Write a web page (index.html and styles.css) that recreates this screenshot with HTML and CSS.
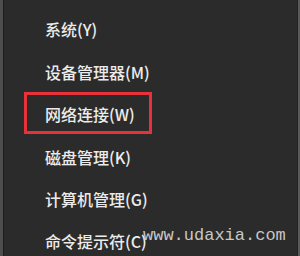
FILE: index.html
```html
<!DOCTYPE html>
<html lang="zh-CN">
<head>
<meta charset="utf-8">
<link rel="stylesheet" href="styles.css">
</head>
<body>
<div class="frame">
  <ul class="menu">
    <li class="item">系统(Y)</li>
    <li class="item">设备管理器(M)</li>
    <li class="item item-marked">网络连接(W)</li>
    <li class="item">磁盘管理(K)</li>
    <li class="item">计算机管理(G)</li>
    <li class="item">命令提示符(C)</li>
  </ul>
  <div class="watermark">www.udaxia.com</div>
</div>
</body>
</html>
```
FILE: styles.css
```css
html, body {
  margin: 0;
  padding: 0;
  background: #2b2b2b;
}
.frame {
  position: relative;
  width: 300px;
  height: 256px;
  box-sizing: border-box;
  border-left: 3px solid #4e4e4e;
  border-right: 2px solid #5a5a5a;
  overflow: hidden;
}
.menu {
  list-style: none;
  margin: 0;
  height: 100%;
  box-sizing: border-box;
  padding: 8.3px 0 0 41px;
  border-left: 1px solid #1e1e1e;
  border-right: 1px solid #232323;
}
.item {
  position: relative;
  height: 42.4px;
  display: flex;
  align-items: center;
  font-family: "Noto Sans CJK SC", "Microsoft YaHei", sans-serif;
  font-size: 16px;
  font-weight: 500;
  color: #ececec;
  white-space: nowrap;
}
.item-marked::before {
  content: "";
  position: absolute;
  left: -21px;
  top: -1.1px;
  width: 128px;
  height: 42px;
  box-sizing: border-box;
  border: 3.5px solid #e8323a;
}
.watermark {
  position: absolute;
  left: 140px;
  top: 226px;
  font-family: "Liberation Mono", "DejaVu Sans Mono", monospace;
  font-size: 17px;
  line-height: 20px;
  color: #c8c8c8;
  white-space: nowrap;
}
```
